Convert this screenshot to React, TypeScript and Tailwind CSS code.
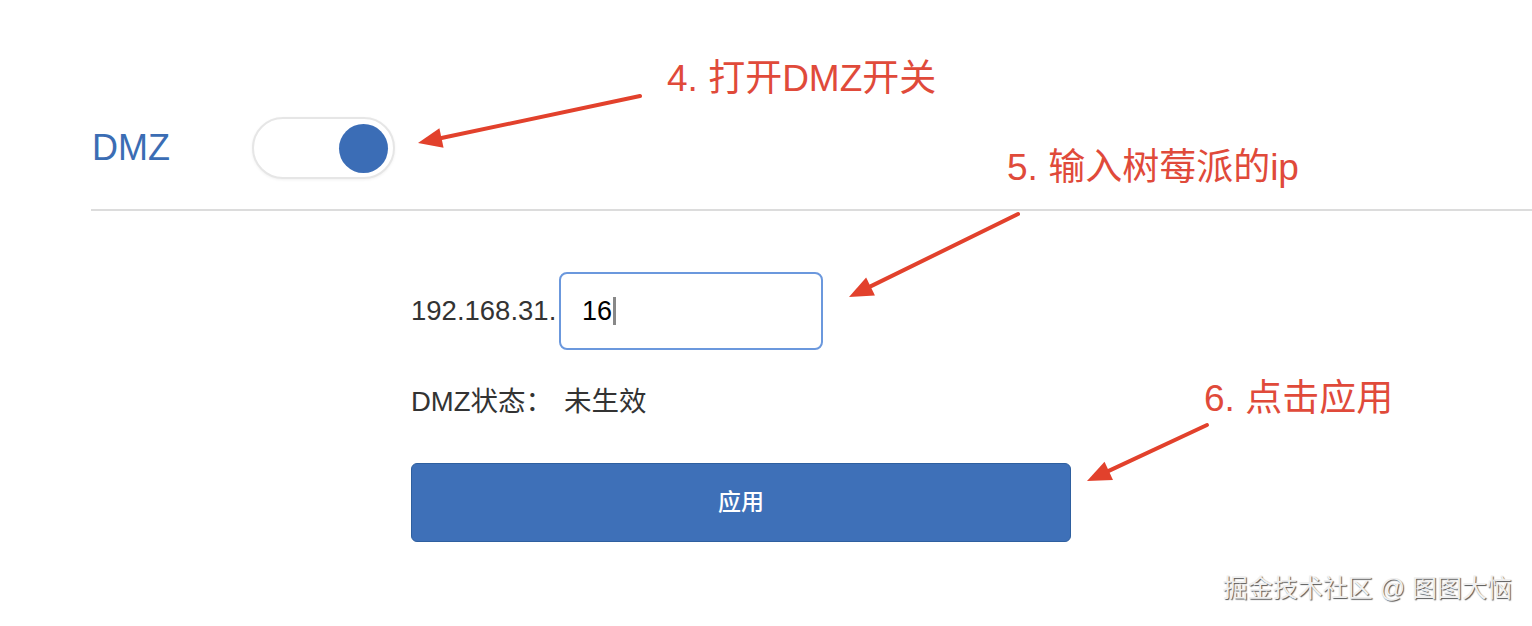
import React from "react";

const FONT = "font-['Liberation_Sans','Noto_Sans_CJK_SC',sans-serif]";

function Arrow({ x1, y1, x2, y2 }: { x1: number; y1: number; x2: number; y2: number }) {
  // shaft from tail (x1,y1) to tip (x2,y2), head drawn as filled triangle
  const dx = x2 - x1;
  const dy = y2 - y1;
  const len = Math.hypot(dx, dy);
  const ux = dx / len;
  const uy = dy / len;
  const headLen = 24;
  const headW = 10;
  const bx = x2 - ux * headLen;
  const by = y2 - uy * headLen;
  const px = -uy * headW;
  const py = ux * headW;
  return (
    <g>
      <line x1={x1} y1={y1} x2={bx} y2={by} stroke="#e2412c" strokeWidth={4} strokeLinecap="round" />
      <polygon
        points={`${x2},${y2} ${bx + px},${by + py} ${bx - px},${by - py}`}
        fill="#e2412c"
      />
    </g>
  );
}

export default function App() {
  return (
    <div className={`relative w-[1532px] h-[626px] overflow-hidden bg-white ${FONT}`}>
      {/* ── Header: DMZ switch ── */}
      <div className="flex items-center pl-[92px] pt-[117px]">
        <span className="w-[160px] text-[36px] leading-none text-[#3b6db4]">DMZ</span>
        <div className="flex h-[62px] w-[143px] items-center justify-end rounded-full border-2 border-[#e6e6e6] bg-white pr-[5px] shadow-[0_1px_3px_rgba(0,0,0,0.06)]">
          <span className="h-[49px] w-[49px] rounded-full bg-[#3b6db6]" />
        </div>
      </div>

      {/* Divider */}
      <div className="ml-[91px] mt-[30px] h-[2px] bg-[#dcdcdc]" />

      {/* ── Form ── */}
      <div className="flex flex-col pl-[411px]">
        <div className="mt-[61px] flex items-center">
          <span className="w-[148px] text-[27.5px] text-[#333]">192.168.31.</span>
          <div className="flex h-[78px] w-[264px] items-center rounded-[8px] border-2 border-[#6b98dd] pl-[21px]">
            <span className="text-[27px] text-black">16</span>
            <span className="ml-[1px] h-[28px] w-[3px] bg-[#888]" />
          </div>
        </div>

        <div className="mt-[34px] flex h-[36px] items-center text-[27.5px] text-[#333]">
          <span className="w-[153px]">DMZ状态：</span>
          <span>未生效</span>
        </div>

        <button className="mt-[43px] flex h-[79px] w-[660px] items-center justify-center rounded-[6px] border border-[#2e5f9f] bg-[#3e70b8] text-[23px] font-medium text-white">
          应用
        </button>
      </div>

      {/* ── Annotations ── */}
      <svg className="pointer-events-none absolute inset-0" width={1532} height={626}>
        <Arrow x1={640} y1={96} x2={418} y2={143} />
        <Arrow x1={1018} y1={214} x2={849} y2={297} />
        <Arrow x1={1207} y1={425} x2={1087} y2={481} />
      </svg>
      <span className="absolute left-[667px] top-[60px] text-[37px] leading-none text-[#e04a3a]">4. 打开DMZ开关</span>
      <span className="absolute left-[1007px] top-[149px] text-[37px] leading-none text-[#e04a3a]">5. 输入树莓派的ip</span>
      <span className="absolute left-[1204px] top-[380px] text-[37px] leading-none text-[#e04a3a]">6. 点击应用</span>

      {/* Watermark */}
      <span className="absolute right-[20px] top-[576px] text-[25px] leading-none text-[#f0f0f0] [text-shadow:1px_1px_1px_#555]">
        掘金技术社区 @ 图图大恼
      </span>
    </div>
  );
}
